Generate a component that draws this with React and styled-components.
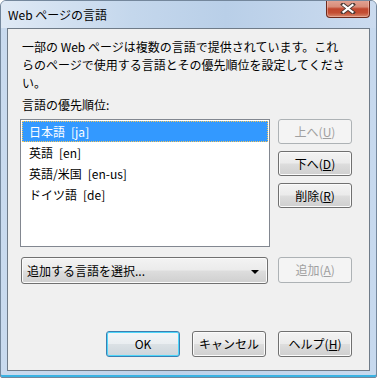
import React from "react";
import styled, { createGlobalStyle, css } from "styled-components";

const GlobalStyle = createGlobalStyle`
    html, body {
        margin: 0;
        padding: 0;
        background: #ffffff;
    }
    body {
        font-family: "Noto Sans CJK JP", "Noto Sans", sans-serif;
        font-size: 12px;
        color: #000000;
    }
`;

const Window = styled.div`
    box-sizing: border-box;
    width: 377px;
    height: 378px;
    display: flex;
    flex-direction: column;
    border: 1px solid #74879c;
    border-radius: 6px 6px 2px 2px;
    background: linear-gradient(to right, #c9daee 0%, #bcd1e9 45%, #c7d9ee 100%);
    box-shadow: inset 0 -2px 0 #39b3e3;
    overflow: hidden;
`;

const TitleBar = styled.div`
    height: 27px;
    display: flex;
    justify-content: space-between;
    align-items: flex-start;
    padding-left: 7px;
    background: linear-gradient(to right, #dfe9f5 0%, #c4d7ec 35%, #b9cfe8 60%, #cbdbef 100%);
`;

const Title = styled.span`
    line-height: 27px;
    font-size: 12px;
    color: #000;
`;

const CloseButton = styled.div`
    box-sizing: border-box;
    width: 44px;
    height: 18px;
    margin-right: 6px;
    margin-top: -1px;
    display: flex;
    align-items: center;
    justify-content: center;
    border: 1px solid #6d2a1c;
    border-top: none;
    border-radius: 0 0 4px 4px;
    background: linear-gradient(#e2a596 0%, #d88c78 40%, #c0472e 52%, #c44e33 75%, #d68a6f 100%);
    box-shadow: inset 0 0 0 1px rgba(255, 210, 200, 0.45);
`;

const Client = styled.div`
    flex: 1;
    margin: 0 6px 6px 6px;
    display: flex;
    flex-direction: column;
    padding: 9px 17px 13px 12px;
    background: #f0f0f0;
    border: 1px solid #6f7b88;
`;

const Intro = styled.p`
    margin: 0 0 4px 2px;
    line-height: 18px;
`;

const Label = styled.div`
    margin-left: 2px;
    line-height: 18px;
`;

const Row = styled.div`
    display: flex;
    gap: 8px;
    margin-top: ${(p) => p.$top || 0}px;
`;

const ListBox = styled.div`
    box-sizing: border-box;
    width: 251px;
    height: 128px;
    padding: 1px;
    background: #ffffff;
    border: 1px solid #828790;
`;

const ListItem = styled.div`
    box-sizing: border-box;
    height: 21px;
    line-height: 19px;
    padding-left: 6px;
    border: 1px solid transparent;
    ${(p) =>
        p.$selected &&
        css`
            background: #3399ff;
            color: #ffffff;
            border: 1px dotted #f5c65a;
        `}
`;

const Code = styled.span`
    margin-left: 6px;
`;

const SideButtons = styled.div`
    display: flex;
    flex-direction: column;
    gap: 7px;
`;

const buttonFace = css`
    box-sizing: border-box;
    border: 1px solid #707070;
    border-radius: 3px;
    background: linear-gradient(#f3f3f3 0%, #ebebeb 48%, #dddddd 52%, #cfcfcf 100%);
    box-shadow: inset 0 0 0 1px #fbfbfb;
    font-family: "Noto Sans CJK JP", "Noto Sans", sans-serif;
    font-size: 12px;
    color: #000000;
`;

const Button = styled.button`
    ${buttonFace}
    width: 74px;
    height: ${(p) => p.$h || 25}px;
    padding: 0;
    line-height: 1;

    ${(p) =>
        p.disabled &&
        css`
            border-color: #adb2b5;
            background: #f4f4f4;
            box-shadow: none;
            color: #a0a0a0;
        `}

    ${(p) =>
        p.$default &&
        css`
            border-color: #3c7fb1;
            box-shadow: inset 0 0 0 1px #4ed6fa;
            background: linear-gradient(#f3f6f8 0%, #eaeef1 48%, #dbe1e5 52%, #cdd5db 100%);
        `}
`;

const Combo = styled.div`
    ${buttonFace}
    width: 248px;
    height: 27px;
    margin-left: 1px;
    display: flex;
    align-items: center;
    justify-content: space-between;
    padding: 0 8px 0 5px;
`;

const Arrow = styled.span`
    width: 0;
    height: 0;
    border-left: 4px solid transparent;
    border-right: 4px solid transparent;
    border-top: 4px solid #000000;
    margin-top: 2px;
`;

const Spacer = styled.div`
    flex: 1;
`;

const Footer = styled.div`
    display: flex;
    justify-content: flex-end;
    gap: 12px;
`;

function Key({ children }) {
    return <u>{children}</u>;
}

function CloseIcon() {
    return (
        <svg width="16" height="11" viewBox="0 0 16 11">
            <path
                d="M3 1.5 L13 9.5 M13 1.5 L3 9.5"
                stroke="#4a3a36"
                strokeWidth="4"
                strokeLinecap="square"
            />
            <path
                d="M3.5 2 L12.5 9 M12.5 2 L3.5 9"
                stroke="#ffffff"
                strokeWidth="2.2"
                strokeLinecap="square"
            />
        </svg>
    );
}

const languages = [
    { name: "日本語", code: "[ja]" },
    { name: "英語", code: "[en]" },
    { name: "英語/米国", code: "[en-us]" },
    { name: "ドイツ語", code: "[de]" },
];

export default function App() {
    return (
        <>
            <GlobalStyle />
            <Window>
                <TitleBar>
                    <Title>Web ページの言語</Title>
                    <CloseButton>
                        <CloseIcon />
                    </CloseButton>
                </TitleBar>
                <Client>
                    <Intro>
                        一部の Web ページは複数の言語で提供されています。これ
                        <br />
                        らのページで使用する言語とその優先順位を設定してくださ
                        <br />
                        い。
                    </Intro>
                    <Label>言語の優先順位:</Label>
                    <Row $top={5}>
                        <ListBox>
                            {languages.map((l, i) => (
                                <ListItem key={l.code} $selected={i === 0}>
                                    {l.name}
                                    <Code>{l.code}</Code>
                                </ListItem>
                            ))}
                        </ListBox>
                        <SideButtons>
                            <Button disabled>
                                上へ(<Key>U</Key>)
                            </Button>
                            <Button>
                                下へ(<Key>D</Key>)
                            </Button>
                            <Button>
                                削除(<Key>R</Key>)
                            </Button>
                        </SideButtons>
                    </Row>
                    <Row $top={10}>
                        <Combo>
                            <span>追加する言語を選択...</span>
                            <Arrow />
                        </Combo>
                        <Button disabled $h={26} style={{ marginLeft: 2 }}>
                            追加(<Key>A</Key>)
                        </Button>
                    </Row>
                    <Spacer />
                    <Footer>
                        <Button $default $h={26}>
                            OK
                        </Button>
                        <Button $h={26}>キャンセル</Button>
                        <Button $h={26}>
                            ヘルプ(<Key>H</Key>)
                        </Button>
                    </Footer>
                </Client>
            </Window>
        </>
    );
}
